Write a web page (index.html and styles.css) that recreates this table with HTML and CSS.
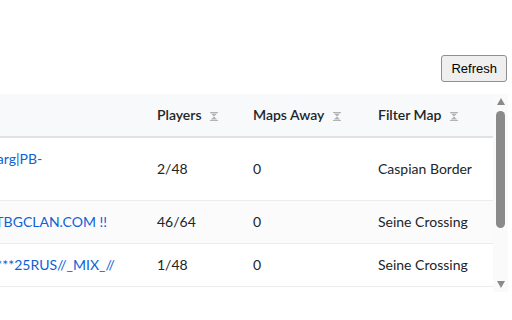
FILE: index.html
```html
<!DOCTYPE html>
<html lang="en">
<head>
<meta charset="utf-8">
<title>Server Browser</title>
<link rel="stylesheet" href="styles.css">
</head>
<body>
<div class="page">
  <div class="toolbar">
    <button class="refresh" type="button">Refresh</button>
  </div>
  <div class="grid-box">
    <div class="grid-view">
      <table class="grid">
        <colgroup>
          <col class="c-name">
          <col class="c-players">
          <col class="c-maps">
          <col class="c-filter">
        </colgroup>
        <thead>
          <tr>
            <th>Server Name <svg class="sort" width="8" height="9" viewBox="0 0 8 9"><path d="M0 0h8v1H0zM0.8 1.4h6.4L4 4.4zM4 4.6l3.2 3H0.8zM0 8h8v1H0z"/></svg></th>
            <th>Players <svg class="sort" width="8" height="9" viewBox="0 0 8 9"><path d="M0 0h8v1H0zM0.8 1.4h6.4L4 4.4zM4 4.6l3.2 3H0.8zM0 8h8v1H0z"/></svg></th>
            <th>Maps Away <svg class="sort" width="8" height="9" viewBox="0 0 8 9"><path d="M0 0h8v1H0zM0.8 1.4h6.4L4 4.4zM4 4.6l3.2 3H0.8zM0 8h8v1H0z"/></svg></th>
            <th>Filter Map <svg class="sort" width="8" height="9" viewBox="0 0 8 9"><path d="M0 0h8v1H0zM0.8 1.4h6.4L4 4.4zM4 4.6l3.2 3H0.8zM0 8h8v1H0z"/></svg></th>
          </tr>
        </thead>
        <tbody>
          <tr>
            <td><a href="#">=KDT= Kampfrad Tharg|PB-ENFORCED|HARD</a></td>
            <td>2/48</td>
            <td>0</td>
            <td>Caspian Border</td>
          </tr>
          <tr class="alt">
            <td><a href="#">!! TDM 24/7 WWW.TBGCLAN.COM !!</a></td>
            <td>46/64</td>
            <td>0</td>
            <td>Seine Crossing</td>
          </tr>
          <tr>
            <td><a href="#">[RU] Moscow Rush ****25RUS//_MIX_//</a></td>
            <td>1/48</td>
            <td>0</td>
            <td>Seine Crossing</td>
          </tr>
        </tbody>
      </table>
    </div>
    <div class="vscroll" aria-hidden="true">
      <div class="arrow up"></div>
      <div class="track"><div class="thumb"></div></div>
      <div class="arrow down"></div>
    </div>
  </div>
</div>
</body>
</html>
```
FILE: styles.css
```css
html, body {
  margin: 0;
  padding: 0;
  background: #ffffff;
}

.page {
  padding: 55px 4px 0 0;
  font-family: "Lato", "Noto Sans", sans-serif;
  color: #212529;
}

.toolbar {
  display: flex;
  justify-content: flex-end;
  margin-bottom: 12px;
}

.refresh {
  font-family: "Liberation Sans", Arial, sans-serif;
  font-size: 13px;
  line-height: 15px;
  color: #000;
  background: #efefef;
  border: 1px solid #8f8f8f;
  border-radius: 3px;
  padding: 5px 9px;
  margin: 0 1px 0 0;
}

.grid-box {
  display: flex;
  height: 198px;
}

.grid-view {
  flex: 1;
  min-width: 0;
  overflow: hidden;
}

.grid {
  border-collapse: collapse;
  table-layout: fixed;
  width: calc(100% + 142px);
  margin-left: -142px;
  font-size: 14px;
  line-height: 20px;
}

.c-name { width: 287px; }
.c-players { width: 96px; }
.c-maps { width: 125px; }
.c-filter { width: 127px; }

.grid th {
  text-align: left;
  font-weight: 600;
  padding: 11px 12px;
  background: #f8f9fa;
  border-bottom: 2px solid #dfe3e8;
  white-space: nowrap;
}

.sort {
  fill: #b3b3b3;
  margin-left: 5px;
  vertical-align: -1px;
}

.grid td {
  padding: 11px 12px;
  border-bottom: 1px solid #ececec;
  vertical-align: middle;
}

.grid tr.alt td {
  background: #fbfbfb;
}

.grid a {
  color: #0d62d6;
  text-decoration: none;
}

.vscroll {
  width: 15px;
  flex: none;
  background: #fafafa;
  display: flex;
  flex-direction: column;
}

.arrow {
  height: 15px;
  flex: none;
  display: flex;
  align-items: center;
  justify-content: center;
}

.arrow::before {
  content: "";
  width: 0;
  height: 0;
  border-left: 4.5px solid transparent;
  border-right: 4.5px solid transparent;
}

.arrow.up::before {
  border-bottom: 7px solid #8a8a8a;
}

.arrow.down::before {
  border-top: 7px solid #8a8a8a;
}

.track {
  flex: 1;
  padding: 2px 3px;
}

.thumb {
  height: 117px;
  background: #8a8a8a;
  border-radius: 5px;
}
```
